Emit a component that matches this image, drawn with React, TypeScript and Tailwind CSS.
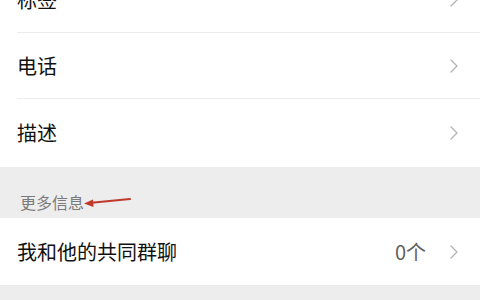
import React from "react";

const Chevron = () => (
  <svg width="8" height="14" viewBox="0 0 8 14" fill="none" className="shrink-0">
    <polyline points="1,1 7,7 1,13" stroke="#b3b3b3" strokeWidth="1.3" strokeLinecap="round" strokeLinejoin="round" />
  </svg>
);

const Row = ({ label, h, border, value }: { label: string; h: string; border?: boolean; value?: string }) => (
  <div className={`bg-white pl-[17px] ${h}`}>
    <div className={`h-full flex items-center pr-[22px] ${border ? "border-b border-[#ececec]" : ""}`}>
      <span className="flex-1 text-[20px] leading-none text-[#111111]">{label}</span>
      {value && <span className="text-[20px] leading-none text-[#5f5f5f] mr-[24px]">{value}</span>}
      <Chevron />
    </div>
  </div>
);

export default function App() {
  return (
    <div
      className="w-[480px] h-[300px] overflow-hidden bg-[#ededed]"
      style={{ fontFamily: '"Noto Sans CJK SC", "Noto Sans", sans-serif' }}
    >
      <div className="-mt-[33px]">
        <Row label="标签" h="h-[66px]" border />
        <Row label="电话" h="h-[66px]" border />
        <Row label="描述" h="h-[68px]" />
        <div className="h-[51px] flex items-end pb-[5px] pl-[20px]">
          <span className="text-[16px] leading-[22px] text-[#7a7a7a]">更多信息</span>
          <svg width="48" height="12" viewBox="0 0 48 12" className="mb-[5px]">
            <line x1="5" y1="7" x2="46" y2="3" stroke="#c0392b" strokeWidth="2" strokeLinecap="round" />
            <polygon points="0,7.5 9,3.5 9.5,11" fill="#c0392b" />
          </svg>
        </div>
        <Row label="我和他的共同群聊" h="h-[67px]" value="0个" />
      </div>
    </div>
  );
}
